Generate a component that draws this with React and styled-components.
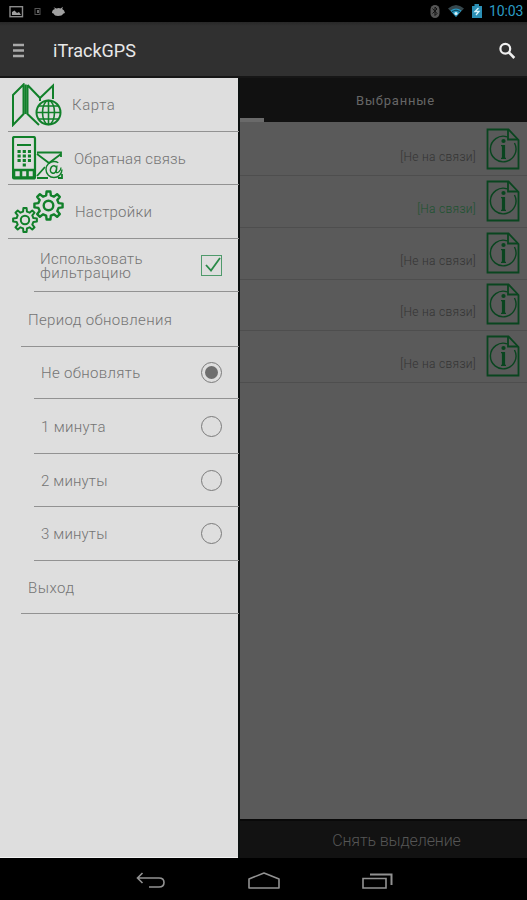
import React, { useState } from 'react';
import styled, { createGlobalStyle } from 'styled-components';

const GlobalStyle = createGlobalStyle`
  * {
    box-sizing: border-box;
  }
  body {
    margin: 0;
    background: #000;
    font-family: Roboto, 'Liberation Sans', sans-serif;
  }
  svg {
    display: block;
    flex: none;
  }
`;

const Screen = styled.div`
  width: 527px;
  height: 900px;
  display: flex;
  flex-direction: column;
  overflow: hidden;
`;

const StatusBar = styled.div`
  height: 22px;
  display: flex;
  align-items: center;
  justify-content: space-between;
  padding: 0 3px 0 9px;
  background: #000;
`;
const StatusIcons = styled.div`
  display: flex;
  align-items: center;
`;
const Clock = styled.span`
  width: 35px;
  margin-left: 6px;
  font-size: 14px;
  line-height: 22px;
  letter-spacing: -0.1px;
  color: #2b9cc4;
  white-space: nowrap;
`;

const AppBar = styled.header`
  height: 56px;
  display: flex;
  align-items: center;
  padding: 3px 11px 0 13px;
  background: linear-gradient(#272727, #303030 4px);
  border-bottom: 2px solid #161616;
`;
const MenuBtn = styled.button`
  width: 11px;
  padding: 0;
  border: 0;
  background: none;
`;
const Title = styled.h1`
  flex: 1;
  margin: 0 0 0 29px;
  font-size: 18px;
  line-height: 22px;
  font-weight: 400;
  letter-spacing: ${(p) => p.$spacing}px;
  color: #e8e8e8;
`;

const Body = styled.div`
  height: 780px;
  display: flex;
  background: #0b0f0f;
`;

const Drawer = styled.nav`
  width: 238px;
  height: 780px;
  flex: none;
  margin-right: 2px;
  background: #dedede;
  border-bottom: 1px solid #f2f2f2;
`;
const DrawerRow = styled.div`
  width: ${(p) => 239 - p.$indent}px;
  height: ${(p) => p.$height}px;
  margin-left: ${(p) => p.$indent}px;
  padding-left: ${(p) => p.$pad}px;
  padding-right: 17px;
  display: flex;
  align-items: center;
  border-bottom: 1px solid #929292;
`;
const RowIcon = styled.div`
  width: ${(p) => p.$width}px;
  flex: none;
`;
const RowLabel = styled.span`
  flex: 1;
  padding-top: 1px;
  font-size: 15px;
  line-height: 14px;
  font-weight: 300;
  letter-spacing: ${(p) => p.$spacing}px;
  color: #747474;
  white-space: pre-line;
`;
const CheckBox = styled.button`
  width: 21px;
  height: 21px;
  padding: 0;
  border: 1px solid #4f9a6b;
  background: none;
`;
const Radio = styled.button`
  width: 21px;
  height: 21px;
  padding: 0;
  display: flex;
  align-items: center;
  justify-content: center;
  border: 1px solid #7a7a7a;
  border-radius: 50%;
  background: none;
`;
const RadioDot = styled.span`
  width: 13px;
  height: 13px;
  border-radius: 50%;
  background: #6e6e6e;
`;

const Content = styled.main`
  flex: 1;
  display: flex;
  flex-direction: column;
  background: #5a5a5a;
`;
const Tabs = styled.div`
  height: 44px;
  display: flex;
  background: #111;
`;
const TabEnd = styled.div`
  width: 24px;
  border-bottom: 4px solid #6a6a6a;
`;
const Tab = styled.div`
  flex: 1;
  padding-top: 1px;
  font-size: 13px;
  line-height: 44px;
  letter-spacing: 0.8px;
  text-align: center;
  color: #666;
`;
const List = styled.div`
  flex: 1;
`;
const Contact = styled.div`
  height: ${(p) => p.$height}px;
  display: flex;
  justify-content: flex-end;
  align-items: flex-end;
  padding: 0 7px 5px 0;
  border-bottom: 1px solid #4e4e4e;
`;
const State = styled.span`
  margin: 0 10px 5px 0;
  font-size: 12px;
  line-height: 16px;
  font-weight: 300;
  letter-spacing: 0.3px;
  color: ${(p) => (p.$online ? '#1c5230' : '#343434')};
`;
const Footer = styled.div`
  height: 39px;
  border-top: 2px solid #090909;
  background: #121212;
  font-size: 16px;
  line-height: 39px;
  font-weight: 300;
  letter-spacing: -0.1px;
  text-align: center;
  padding-left: 26px;
  color: #565656;
`;

const NavBar = styled.div`
  height: 42px;
  display: flex;
  align-items: center;
  gap: 82px;
  padding: 3px 0 0 136px;
  background: #000;
`;

const GREEN = '#11802a';

const gear = (cx, cy, outer, inner, teeth, turn) => {
  const step = (Math.PI * 2) / teeth;
  const points = [];
  for (let i = 0; i < teeth; i++) {
    const a = i * step + turn;
    [
      [-0.29, inner],
      [-0.17, outer],
      [0.17, outer],
      [0.29, inner],
    ].forEach(([k, r]) => {
      points.push(
        `${(cx + r * Math.cos(a + k * step)).toFixed(2)} ${(cy + r * Math.sin(a + k * step)).toFixed(2)}`
      );
    });
  }
  return `M${points.join('L')}Z`;
};

function MapIcon() {
  return (
    <svg width="50" height="44" fill="none" stroke={GREEN} strokeWidth="2">
      <path d="M1 12 11.5 1.5V31L1 42ZM15.5 2V31L27 42M15.5 2 28 15 41 2.5V16M28 15V18" />
      <path d="M13.5 1.5V31" strokeWidth="2.4" />
      <circle cx="36.5" cy="29.5" r="12" />
      <ellipse cx="36.5" cy="29.5" rx="6" ry="12" strokeWidth="1.6" />
      <path d="M36.5 17.5V41.5M24.5 29.5H48.5M27 23H46M27 36H46" strokeWidth="1.6" />
    </svg>
  );
}

function FeedbackIcon() {
  return (
    <svg width="51" height="44" fill="none" stroke={GREEN} strokeWidth="1.8">
      <rect x="1" y="1" width="22" height="41.5" rx="1.5" strokeWidth="2.2" />
      <path d="M5 9H19" strokeWidth="2" />
      <path d="M5.5 15.5H19M5.5 20H19" strokeWidth="3" strokeDasharray="3.2 2" />
      <path d="M5.5 24.5H19" strokeWidth="3" strokeDasharray="3.2 2" />
      <path d="M10.7 29H13.9" strokeWidth="3" />
      <path d="M1 34H23" strokeWidth="2.5" />
      <path d="M1 41.5H23M2 34V42M9 34V42M15.5 34V42M22 34V42" strokeWidth="2.6" />
      <path d="M25 16.5H49V21M25 18 37 27 49 18M25 42H36M25 40 33 31M46 42H50V38" />
      <circle cx="42" cy="33.5" r="8" strokeWidth="1.4" strokeDasharray="42 8" />
      <ellipse cx="41.5" cy="33.5" rx="3" ry="3.8" transform="rotate(20 41.5 33.5)" strokeWidth="1.5" />
      <path d="M45 29.5 44 36C45.5 38 49 34.5 49 31.5" strokeWidth="1.3" />
    </svg>
  );
}

function SettingsIcon() {
  return (
    <svg width="53" height="46" fill="none" stroke={GREEN} strokeWidth="2.4" strokeLinejoin="round">
      <path d={gear(36.5, 16.5, 14.2, 10.4, 8, 0)} />
      <circle cx="36.5" cy="16.5" r="4.8" />
      <path d={gear(13, 31, 12, 8.6, 8, Math.PI / 2)} strokeWidth="2" />
      <circle cx="13" cy="31" r="4.2" strokeWidth="2" />
    </svg>
  );
}

function InfoIcon() {
  return (
    <svg width="34" height="42" fill="none" stroke="#09451f" strokeWidth="1.8">
      <path d="M1.5 1.5H22.5L32.5 12V40.5H1.5Z" />
      <path d="M22 1.5V11.5H32" />
      <path d="M21 8.8A12.8 12.8 0 1 0 28.5 15" strokeWidth="1.4" />
      <circle cx="17.5" cy="13" r="2.1" fill="#09451f" stroke="none" />
      <path d="M17.5 17V31" strokeWidth="3.2" />
      <path d="M15 17.6H18M15 30.4H20" strokeWidth="1.2" />
    </svg>
  );
}

const sections = [
  { label: 'Карта', Icon: MapIcon, height: 54, width: 60, spacing: 0.6 },
  { label: 'Обратная связь', Icon: FeedbackIcon, height: 53, width: 62, spacing: 0.15 },
  { label: 'Настройки', Icon: SettingsIcon, height: 54, width: 63, spacing: 0.25 },
];

const periods = [
  { label: 'Не обновлять', height: 52, spacing: 0.33 },
  { label: '1 минута', height: 55, spacing: 0.35 },
  { label: '2 минуты', height: 53, spacing: 0.15 },
  { label: '3 минуты', height: 54, spacing: 0.15 },
];

const contacts = [
  { online: false, height: 54 },
  { online: true, height: 52 },
  { online: false, height: 52 },
  { online: false, height: 51 },
  { online: false, height: 52 },
];

function App() {
  const [filter, setFilter] = useState(true);
  const [period, setPeriod] = useState(0);

  return (
    <Screen>
      <GlobalStyle />
      <StatusBar>
        <StatusIcons>
          <svg width="60" height="22" fill="#a0a0a0">
            <rect x="1" y="6.7" width="12.5" height="10" fill="none" stroke="#8b8b8b" strokeWidth="1.4" />
            <path d="M3 15V12L5.5 10.5 8 13 10 12 12 15Z" />
            <rect x="26" y="8.5" width="5" height="6" fill="none" stroke="#555" />
            <path d="M28 10H30V13H28Z" fill="#666" />
            <path d="M43 13Q43 9.5 46 9L44.5 7.2 47.5 8.4Q50 7.8 51.5 8.4L54 6.8 53.2 9Q55.5 10 56 13L54.5 13.5Q53 16 49 16 45.5 16 44.5 13.5Z" />
          </svg>
        </StatusIcons>
        <StatusIcons>
          <svg width="53" height="22">
            <rect x="0.5" y="5" width="9" height="13" rx="4.5" fill="#555" />
            <path d="M2.5 8.5 7 13.5 5 15.5V7L7 9 2.5 13.5" fill="none" stroke="#111" />
            <path d="M18 8.5Q26 1.5 34 8.5L26 17Z" fill="#36474d" />
            <path d="M20.5 10.5Q26 6.5 31.5 10.5L26 17Z" fill="#2899c2" />
            <path d="M22 11.5Q26 8.8 30 11.5" fill="none" stroke="#0b3b4e" />
            <circle cx="26" cy="13.5" r="1.6" fill="#d6f2fb" />
            <path d="M42 6H44.5V4H49V6H52V18H42Z" fill="#2b8fb5" />
            <path d="M48.5 8 45 11.5H49L46 15" fill="none" stroke="#d6f2fb" strokeWidth="1.3" />
          </svg>
          <Clock>10:03</Clock>
        </StatusIcons>
      </StatusBar>

      <AppBar>
        <MenuBtn>
          <svg width="11" height="15" stroke="#a9a9a9" strokeWidth="2.4">
            <path d="M0 2H11M0 7.5H11M0 13H11" />
          </svg>
        </MenuBtn>
        <Title $spacing={0}>iTrackGPS</Title>
        <svg width="18" height="18" fill="none" stroke="#efefef" strokeWidth="2.2">
          <circle cx="7.3" cy="6.7" r="4.9" />
          <path d="M10.8 10.3 16.3 16" strokeWidth="2.6" />
        </svg>
      </AppBar>

      <Body>
        <Drawer>
          {sections.map(({ label, Icon, height, width, spacing }) => (
            <DrawerRow key={label} $indent={8} $pad={4} $height={height}>
              <RowIcon $width={width}>
                <Icon />
              </RowIcon>
              <RowLabel $spacing={spacing}>{label}</RowLabel>
            </DrawerRow>
          ))}
          <DrawerRow $indent={34} $pad={6} $height={53}>
            <RowLabel $spacing={0.32}>{'Использовать\nфильтрацию'}</RowLabel>
            <CheckBox onClick={() => setFilter(!filter)}>
              {filter && (
                <svg width="19" height="19" fill="none" stroke="#2a8a48" strokeWidth="1.8">
                  <path d="M4 9 9 14.5 18 2" />
                </svg>
              )}
            </CheckBox>
          </DrawerRow>
          <DrawerRow $indent={21} $pad={7} $height={55}>
            <RowLabel $spacing={0.35}>Период обновления</RowLabel>
          </DrawerRow>
          {periods.map(({ label, height, spacing }, i) => (
            <DrawerRow key={label} $indent={34} $pad={7} $height={height}>
              <RowLabel $spacing={spacing}>{label}</RowLabel>
              <Radio onClick={() => setPeriod(i)}>{period === i && <RadioDot />}</Radio>
            </DrawerRow>
          ))}
          <DrawerRow $indent={21} $pad={7} $height={53}>
            <RowLabel $spacing={0.5}>Выход</RowLabel>
          </DrawerRow>
        </Drawer>

        <Content>
          <Tabs>
            <TabEnd />
            <Tab>Выбранные</Tab>
          </Tabs>
          <List>
            {contacts.map(({ online, height }, i) => (
              <Contact key={i} $height={height}>
                <State $online={online}>{online ? '[На связи]' : '[Не на связи]'}</State>
                <InfoIcon />
              </Contact>
            ))}
          </List>
          <Footer>Снять выделение</Footer>
        </Content>
      </Body>

      <NavBar>
        <svg width="30" height="18" fill="none" stroke="#929292" strokeWidth="1.6">
          <path d="M6.5 1 1.5 6 6.5 11M1.5 6H23Q28 6 28 10.5 28 15 23 15H13" />
        </svg>
        <svg width="32" height="18" fill="none" stroke="#929292" strokeWidth="1.6">
          <path d="M1 7 16 1 31 7V16H1Z" strokeLinejoin="round" />
        </svg>
        <svg width="31" height="18" fill="none" stroke="#929292" strokeWidth="1.6">
          <path d="M1 6.5H24V16H1Z" />
          <path d="M8 2.5H29.5V13" strokeWidth="2" />
        </svg>
      </NavBar>
    </Screen>
  );
}

export default App;
